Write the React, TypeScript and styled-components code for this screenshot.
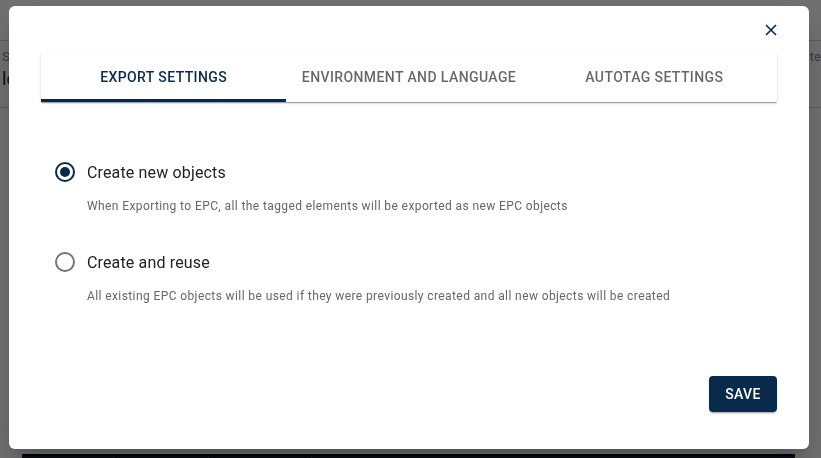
import styled, { createGlobalStyle } from 'styled-components';

const NAVY = '#0a2a4c';

const GlobalStyle = createGlobalStyle`
  html, body {
    margin: 0;
    padding: 0;
    height: 100%;
    background: #ffffff;
    font-family: Roboto, 'Liberation Sans', sans-serif;
    overflow: hidden;
  }
`;

const Page = styled.div`
  width: 821px;
  height: 458px;
  padding-top: 40px;
  box-sizing: border-box;
`;

const PageHeader = styled.div`
  height: 68px;
  border-top: 1px solid #cfcfcf;
  border-bottom: 1px solid #cfcfcf;
  display: flex;
  justify-content: space-between;
  padding: 8px 0 0 2px;
  box-sizing: border-box;
`;

const HeaderCol = styled.div`
  display: flex;
  flex-direction: column;
  gap: 4px;
`;

const HeaderSmall = styled.span`
  font-size: 13px;
  color: #888;
`;

const HeaderBig = styled.span`
  font-size: 18px;
  color: #222;
`;

const TableHead = styled.div`
  margin: 346px 26px 0 22px;
  height: 20px;
  background: #0f1a2e;
  display: grid;
  grid-template-columns: 92px 95px 103px 1fr;
  border-top: 2px solid #000;
`;

const HeadCell = styled.div`
  border-right: 1px solid #2a3548;
`;

const Overlay = styled.div`
  position: fixed;
  inset: 0;
  background: rgba(0, 0, 0, 0.56);
  display: flex;
  align-items: flex-start;
  padding: 6px 0 0 9px;
`;

const Modal = styled.div`
  position: relative;
  width: 800px;
  height: 443px;
  background: #fff;
  border-radius: 6px;
  box-shadow: 0 11px 15px -7px rgba(0, 0, 0, 0.2), 0 24px 38px 3px rgba(0, 0, 0, 0.14);
  padding: 47px 32px 0 32px;
  box-sizing: border-box;
  display: flex;
  flex-direction: column;
`;

const CloseButton = styled.button`
  position: absolute;
  top: 14px;
  right: 28px;
  width: 20px;
  height: 20px;
  border: none;
  background: none;
  padding: 0;
  display: flex;
  align-items: center;
  justify-content: center;
  cursor: pointer;
`;

const Tabs = styled.div`
  display: grid;
  grid-template-columns: repeat(3, 1fr);
  height: 49px;
  background: #fff;
  box-shadow: 0 2px 1px -1px rgba(0, 0, 0, 0.2), 0 1px 1px 0 rgba(0, 0, 0, 0.14),
    0 1px 3px 0 rgba(0, 0, 0, 0.12);
`;

const Tab = styled.div<{ active?: boolean }>`
  display: flex;
  align-items: center;
  justify-content: center;
  font-size: 14px;
  font-weight: 500;
  letter-spacing: 0.4px;
  text-transform: uppercase;
  color: ${(p) => (p.active ? NAVY : 'rgba(0, 0, 0, 0.6)')};
  border-bottom: 3px solid ${(p) => (p.active ? NAVY : 'transparent')};
  padding-top: 2px;
`;

const Options = styled.div`
  padding: 60px 0 0 14px;
  display: flex;
  flex-direction: column;
  gap: 39px;
`;

const Option = styled.div`
  display: flex;
  flex-direction: column;
  gap: 17px;
`;

const OptionRow = styled.label`
  display: flex;
  align-items: center;
  gap: 12px;
  font-size: 16px;
  color: #222;
  letter-spacing: 0.15px;
`;

const Radio = styled.span<{ checked?: boolean }>`
  width: 20px;
  height: 20px;
  border-radius: 50%;
  border: 2px solid ${(p) => (p.checked ? NAVY : '#757575')};
  box-sizing: border-box;
  display: flex;
  align-items: center;
  justify-content: center;
  &::after {
    content: '';
    width: 10px;
    height: 10px;
    border-radius: 50%;
    background: ${(p) => (p.checked ? NAVY : 'transparent')};
  }
`;

const Description = styled.p`
  margin: 0 0 0 32px;
  font-size: 12px;
  letter-spacing: 0.4px;
  color: #666;
`;

const Footer = styled.div`
  margin-top: auto;
  display: flex;
  justify-content: flex-end;
  padding-bottom: 37px;
`;

const SaveButton = styled.button`
  width: 68px;
  height: 36px;
  border: none;
  border-radius: 4px;
  background: ${NAVY};
  color: #fff;
  font-family: inherit;
  font-size: 14px;
  font-weight: 500;
  letter-spacing: 0.4px;
  box-shadow: 0 3px 1px -2px rgba(0, 0, 0, 0.2), 0 2px 2px 0 rgba(0, 0, 0, 0.14);
`;

function App() {
  return (
    <>
      <GlobalStyle />
      <Page>
        <PageHeader>
          <HeaderCol>
            <HeaderSmall>Settings</HeaderSmall>
            <HeaderBig>le</HeaderBig>
          </HeaderCol>
          <HeaderCol>
            <HeaderSmall>late</HeaderSmall>
          </HeaderCol>
        </PageHeader>
        <TableHead>
          <HeadCell />
          <HeadCell />
          <HeadCell />
          <HeadCell />
        </TableHead>
      </Page>
      <Overlay>
        <Modal>
          <CloseButton aria-label="close">
            <svg width="12" height="12" viewBox="0 0 12 12">
              <path d="M1 1L11 11M11 1L1 11" stroke={NAVY} strokeWidth="1.6" />
            </svg>
          </CloseButton>
          <Tabs>
            <Tab active>Export settings</Tab>
            <Tab>Environment and language</Tab>
            <Tab>Autotag settings</Tab>
          </Tabs>
          <Options>
            <Option>
              <OptionRow>
                <Radio checked />
                Create new objects
              </OptionRow>
              <Description>
                When Exporting to EPC, all the tagged elements will be exported as new EPC objects
              </Description>
            </Option>
            <Option>
              <OptionRow>
                <Radio />
                Create and reuse
              </OptionRow>
              <Description>
                All existing EPC objects will be used if they were previously created and all new
                objects will be created
              </Description>
            </Option>
          </Options>
          <Footer>
            <SaveButton>SAVE</SaveButton>
          </Footer>
        </Modal>
      </Overlay>
    </>
  );
}

export default App;
